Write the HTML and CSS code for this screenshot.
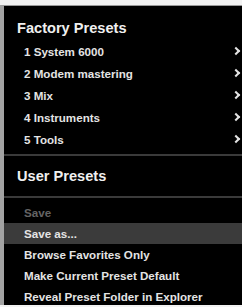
FILE: index.html
```html
<!DOCTYPE html>
<html lang="en">
<head>
  <meta charset="UTF-8">
  <title>Preset Menu</title>
  <link rel="stylesheet" href="styles.css">
</head>
<body>
  <div id="preset-menu">
    <div class="menu-heading factory-heading">Factory Presets</div>
    <div class="menu-group factory-group">
      <div class="menu-item">1 System 6000<span class="chevron"></span></div>
      <div class="menu-item">2 Modem mastering<span class="chevron"></span></div>
      <div class="menu-item">3 Mix<span class="chevron"></span></div>
      <div class="menu-item">4 Instruments<span class="chevron"></span></div>
      <div class="menu-item">5 Tools<span class="chevron"></span></div>
    </div>
    <div class="menu-separator"></div>
    <div class="menu-heading user-heading">User Presets</div>
    <div class="menu-separator"></div>
    <div class="menu-group user-group">
      <div class="menu-item disabled">Save</div>
      <div class="menu-item selected">Save as...</div>
      <div class="menu-item">Browse Favorites Only</div>
      <div class="menu-item">Make Current Preset Default</div>
      <div class="menu-item">Reveal Preset Folder in Explorer</div>
    </div>
  </div>
</body>
</html>
```

FILE: styles.css
```css
body {
  margin: 0;
  background-color: #f2f2f2;
  height: 100vh;
  overflow: hidden;
}

#preset-menu {
  margin-top: 5px;
  height: 300px;
  background-color: #000;
  border-top: 1px solid #9a9a9a;
  border-left: 4px solid #a3a3a3;
  padding-top: 10px;
  font-family: "Liberation Sans", Arial, sans-serif;
  font-weight: bold;
  color: #e4e4e4;
  box-sizing: border-box;
  overflow: hidden;
}

.menu-heading {
  padding-left: 13px;
  font-size: 14.6px;
  color: #f0f0f0;
}

.factory-heading {
  line-height: 24px;
}

.user-heading {
  line-height: 40px;
}

.menu-item {
  display: flex;
  align-items: center;
  justify-content: space-between;
  padding-left: 20px;
  padding-right: 2px;
  font-size: 11.6px;
  white-space: nowrap;
}

.factory-group .menu-item {
  height: 22px;
}

.user-group {
  padding-top: 4px;
}

.user-group .menu-item {
  height: 21px;
}

.menu-item.disabled {
  color: #646464;
}

.menu-item.selected {
  background-color: #3b3b3b;
}

.chevron {
  width: 4px;
  height: 4px;
  border-top: 2px solid #e4e4e4;
  border-right: 2px solid #e4e4e4;
  transform: rotate(45deg);
  margin-right: 1px;
}

.menu-separator {
  height: 2px;
  background-color: #3a3a3a;
}

.factory-group + .menu-separator {
  margin-top: 4px;
}
```
